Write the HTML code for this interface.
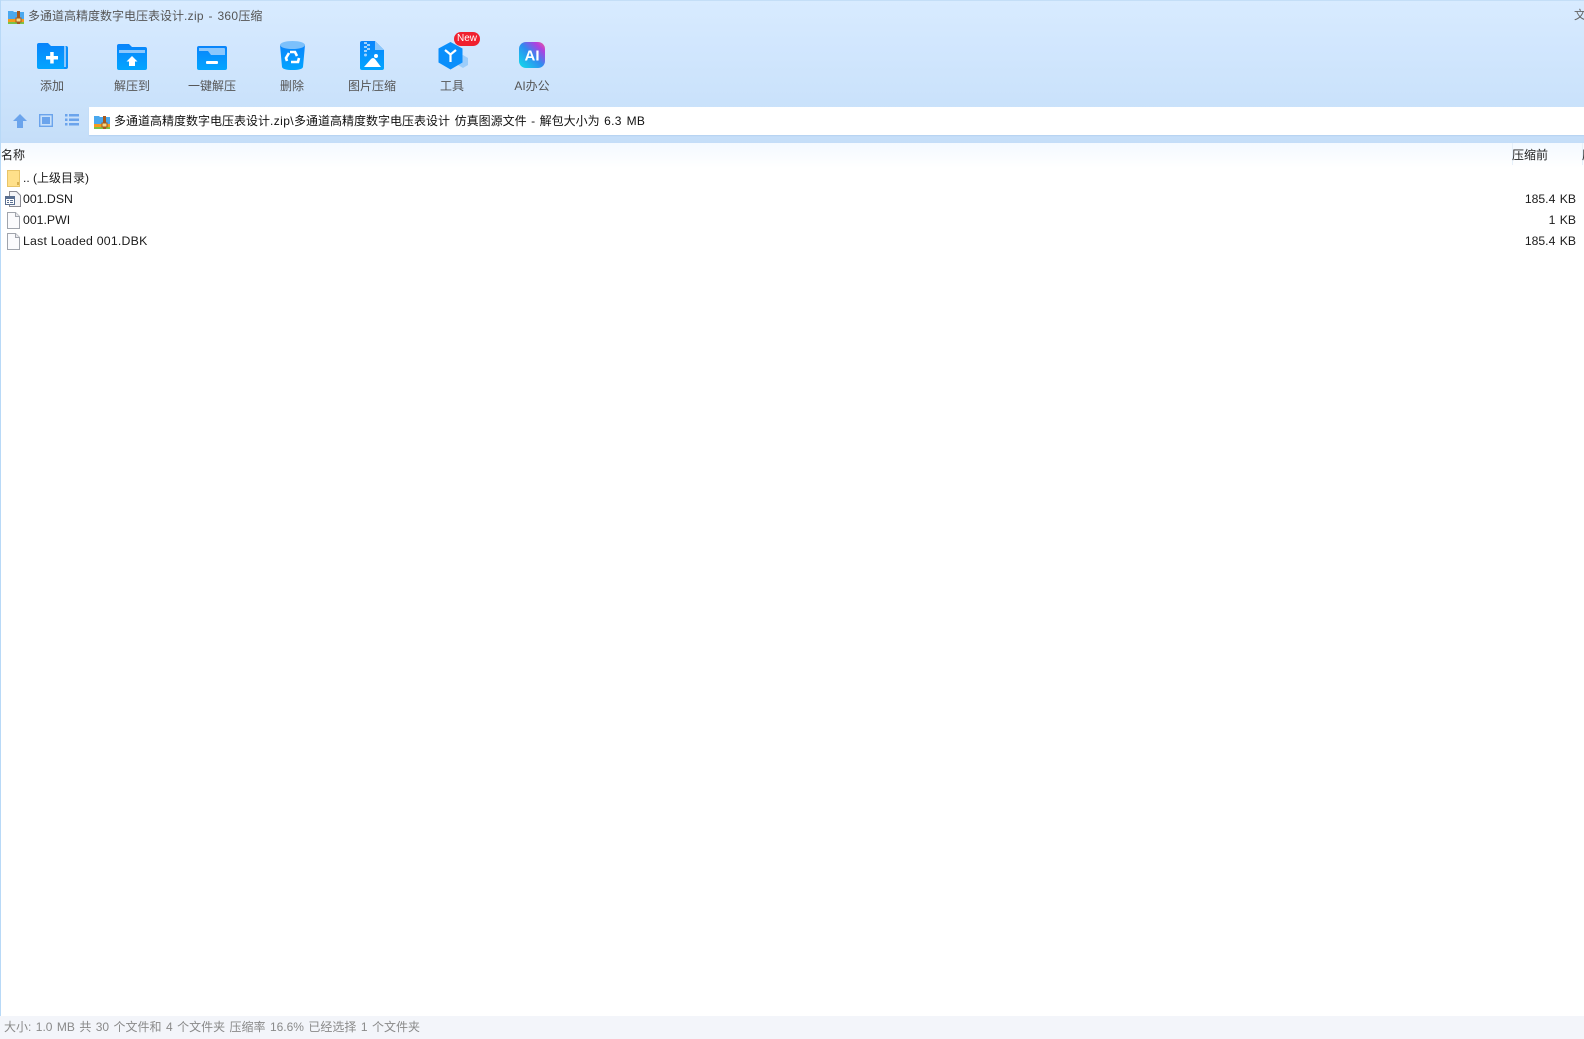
<!DOCTYPE html>
<html lang="zh"><head><meta charset="utf-8"><title>360压缩</title>
<style>
html,body{margin:0;padding:0;width:1584px;height:1039px;overflow:hidden;background:#fff}
body{position:relative;font-family:"Liberation Sans","Noto Sans CJK SC",sans-serif;font-size:12px;color:#222}
.a{position:absolute;white-space:nowrap;line-height:16px}
svg{position:absolute;overflow:visible}
.lbl{width:80px;text-align:center;top:78px;color:#555}
.row{left:23px;color:#1a1a1a;font-size:12.3px}
.sz{right:8px;color:#1a1a1a;font-size:12.2px;word-spacing:1px}
</style></head><body>
<div class="a" style="left:0;top:0;width:1584px;height:143px;background:linear-gradient(#d8ebff 0,#d2e7fe 40px,#c6dff9 135px,#c4ddf8 143px);border-top:1px solid #c4def7;box-sizing:border-box"></div>
<div class="a" style="left:0;top:143px;width:1584px;height:25px;background:linear-gradient(#f3f9ff,#fff)"></div>
<div class="a" style="left:0;top:0;width:1px;height:1016px;background:#b8d9f7"></div>

<svg style="left:8px;top:10px" width="16" height="14" viewBox="0 0 16 14"><path d="M0 1h5l1 1h10v9H0z" fill="#4aa8ee"/><rect y="9" width="16" height="3" fill="#f59a1c"/><rect y="12" width="16" height="2" fill="#7cc246"/><rect x="9" y="1" width="3" height="13" fill="#a5591d"/><rect x="8" y="8" width="5" height="4" fill="#f5d98a" stroke="#a5591d"/></svg>
<div class="a" style="left:28px;top:8px;color:#555;word-spacing:1px"><span>多通道高精度数字电压表设计</span><span style="letter-spacing:.3px">.zip - 360</span>压缩</div>
<div class="a" style="left:1574px;top:7px;color:#666">文</div>

<!-- add -->
<svg style="left:37px;top:43px" width="32" height="27" viewBox="0 0 32 27"><defs><linearGradient id="g" x1="0" y1="0" x2="0" y2="1"><stop offset="0" stop-color="#0a84fb"/><stop offset="1" stop-color="#02a5ff"/></linearGradient></defs><path d="M26 3h3q2 0 2 2v19q0 2-2 2h-3z" fill="#0a8ffb"/><path d="M27 3h1q1 0 1 1v20h-2z" fill="#8cc7fc"/><path d="M0 2q0-2 2-2h9l3 3h13v23H2q-2 0-2-2z" fill="url(#g)"/><rect x="9" y="13" width="12" height="3.500" fill="#fff"/><rect x="13.200" y="9" width="3.500" height="11.500" fill="#fff"/></svg>
<!-- extract -->
<svg style="left:117px;top:44px" width="30" height="26" viewBox="0 0 30 26"><path d="M0 2q0-2 2-2h10l3 3h13q2 0 2 2v19q0 2-2 2H2q-2 0-2-2z" fill="url(#g)"/><rect x="2" y="6" width="26" height="3" fill="#8cc7fc"/><path d="M15 12l5.500 5.500H18v4.500h-6v-4.500H9.500z" fill="#fff"/></svg>
<!-- one-click -->
<svg style="left:197px;top:46px" width="30" height="24" viewBox="0 0 30 24"><path d="M0 2q0-2 2-2h26q2 0 2 2v20q0 2-2 2H2q-2 0-2-2z" fill="url(#g)"/><path d="M2 2h25a1 1 0 0 1 1 1v6H14l-3-4H2z" fill="#8cc7fc"/><rect x="9" y="15" width="12" height="3" rx="1" fill="#fff"/></svg>
<!-- trash -->
<svg style="left:280px;top:41px" width="25" height="29" viewBox="0 0 25 29"><path d="M0 4l2 22q1 3 10.500 3T23 26l2-22z" fill="url(#g)"/><ellipse cx="12.500" cy="4" rx="12.500" ry="4" fill="#7cc0fb"/><g fill="none" stroke="#fff" stroke-width="2.600"><path d="M7 20l-1-3 3-5"/><path d="M10 11h5l2 4"/><path d="M19 17l-1 4h-7"/></g></svg>
<!-- image -->
<svg style="left:360px;top:41px" width="24" height="29" viewBox="0 0 24 29"><path d="M2 0h13l9 9v18q0 2-2 2H2q-2 0-2-2V2q0-2 2-2z" fill="url(#g)"/><path d="M15 0l9 9h-9z" fill="#8cc7fc"/><g fill="#9fd2fd"><rect x="4" y="1" width="3" height="2"/><rect x="7" y="3" width="3" height="2"/><rect x="4" y="5" width="3" height="2"/><rect x="7" y="7" width="3" height="2"/><rect x="4" y="9" width="3" height="2"/><circle cx="5.500" cy="14" r="1.500"/></g><circle cx="16" cy="15" r="2" fill="#fff"/><path d="M4 26l7-8q2-2 4 0l6 8z" fill="#fff"/></svg>
<!-- tools -->
<svg style="left:438px;top:41px" width="32" height="30" viewBox="0 0 32 30"><path d="M20 17l5-3 5 3v7l-5 3-5-3z" fill="#9ccdfa"/><path d="M12.500 1l12 6.500v14l-12 7-12-7v-14z" fill="#0a8ffb"/><path d="M7 9l5.500 4.500L18 9M12.500 13.500V21" fill="none" stroke="#fff" stroke-width="2.200"/></svg>
<div class="a" style="left:454px;top:32px;width:26px;height:14px;border-radius:7px;background:#f0202f;color:#fff;font-size:10px;line-height:14px;text-align:center">New</div>
<!-- AI -->
<svg style="left:519px;top:42px" width="26" height="26" viewBox="0 0 26 26"><defs><linearGradient id="ai" x1="0" y1="1" x2="1" y2="0"><stop offset="0" stop-color="#0fe0ea"/><stop offset=".5" stop-color="#2f8cf0"/><stop offset=".8" stop-color="#b040e0"/><stop offset="1" stop-color="#f06090"/></linearGradient></defs><rect width="26" height="26" rx="7" fill="url(#ai)"/><text x="13" y="18.500" text-anchor="middle" font-family="Liberation Sans" font-weight="bold" font-size="15" fill="#fff">AI</text></svg>

<div class="a lbl" style="left:12px">添加</div>
<div class="a lbl" style="left:92px">解压到</div>
<div class="a lbl" style="left:172px">一键解压</div>
<div class="a lbl" style="left:252px">删除</div>
<div class="a lbl" style="left:332px">图片压缩</div>
<div class="a lbl" style="left:412px">工具</div>
<div class="a lbl" style="left:492px">AI办公</div>

<svg style="left:13px;top:114px" width="14" height="14" viewBox="0 0 14 14"><path d="M7 0l7 7h-4v7H4V7H0z" fill="#6ba4ec"/></svg>
<svg style="left:39px;top:114px" width="14" height="13" viewBox="0 0 14 13"><rect x=".7" y=".7" width="12.600" height="11.600" fill="none" stroke="#6ba4ec" stroke-width="1.400"/><rect x="3" y="3" width="8" height="7" fill="#6ba4ec"/></svg>
<svg style="left:65px;top:114px" width="14" height="12" viewBox="0 0 14 12"><g fill="#6ba4ec"><rect width="2.500" height="2.500"/><rect y="4.500" width="2.500" height="2.500"/><rect y="9" width="2.500" height="2.500"/><rect x="4" width="10" height="2.500"/><rect x="4" y="4.500" width="10" height="2.500"/><rect x="4" y="9" width="10" height="2.500"/></g></svg>

<div class="a" style="left:89px;top:107px;width:1495px;height:28px;background:#fff;box-shadow:0 1px 1px #b6d2f0"></div>
<svg style="left:94px;top:115px" width="16" height="14" viewBox="0 0 16 14"><path d="M0 1h5l1 1h10v9H0z" fill="#4aa8ee"/><rect y="9" width="16" height="3" fill="#f59a1c"/><rect y="12" width="16" height="2" fill="#7cc246"/><rect x="9" y="1" width="3" height="13" fill="#a5591d"/><rect x="8" y="8" width="5" height="4" fill="#f5d98a" stroke="#a5591d"/></svg>
<div class="a" style="left:114px;top:113px;color:#111;word-spacing:1.2px">多通道高精度数字电压表设计<span style="letter-spacing:.4px">.zip\</span>多通道高精度数字电压表设计 仿真图源文件 - 解包大小为 <span style="letter-spacing:.3px">6.3 MB</span></div>

<div class="a" style="left:1px;top:147px;color:#222">名称</div>
<div class="a" style="left:1512px;top:143px;width:1px;height:22px;background:#e6f0fa"></div>
<div class="a" style="left:1582px;top:143px;width:1px;height:22px;background:#e6f0fa"></div>
<div class="a" style="left:1512px;top:147px;color:#222">压缩前</div>
<div class="a" style="left:1582px;top:147px;color:#222;width:2px;overflow:hidden">压</div>

<svg style="left:7px;top:170px" width="13" height="17" viewBox="0 0 13 17"><path d="M.5.500h12v16H.5z" fill="#ffe08a" stroke="#e8c468"/><rect x="10" y="12" width="2" height="3" fill="#d8b050"/></svg>
<div class="a row" style="top:170px;font-size:12px">.. (上级目录)</div>
<svg style="left:5px;top:191px" width="16" height="16" viewBox="0 0 16 16"><path d="M4.500.500h7l4 4v11h-11z" fill="#f4f4f6" stroke="#8a8a92"/><rect x="0" y="5" width="10" height="9" fill="#5a6f90"/><rect x="1" y="8" width="8" height="5" fill="#fff"/><g fill="#5a6f90"><rect x="2" y="9" width="2" height="1"/><rect x="5" y="9" width="3" height="1"/><rect x="2" y="11" width="2" height="1"/><rect x="5" y="11" width="3" height="1"/></g></svg>
<div class="a row" style="top:191px">001.DSN</div>
<svg style="left:7px;top:212px" width="13" height="17" viewBox="0 0 13 17"><path d="M.5.500h8l4 4v12H.5z" fill="#fbfbfd" stroke="#a0a4ac"/><path d="M8.500.500v4h4" fill="#e8e8ec" stroke="#a0a4ac"/></svg>
<div class="a row" style="top:212px">001.PWI</div>
<svg style="left:7px;top:233px" width="13" height="17" viewBox="0 0 13 17"><path d="M.5.500h8l4 4v12H.5z" fill="#fbfbfd" stroke="#a0a4ac"/><path d="M8.500.500v4h4" fill="#e8e8ec" stroke="#a0a4ac"/></svg>
<div class="a row" style="top:233px;letter-spacing:.22px">Last Loaded 001.DBK</div>
<div class="a sz" style="top:191px">185.4 KB</div>
<div class="a sz" style="top:212px">1 KB</div>
<div class="a sz" style="top:233px">185.4 KB</div>

<div class="a" style="left:0;top:1016px;width:1584px;height:23px;background:#f3f5fa"></div>
<div class="a" style="left:4px;top:1019px;color:#8a8a8a;font-size:12px;word-spacing:1.1px">大小: 1.0 MB 共 30 个文件和 4 个文件夹 压缩率 16.6% 已经选择 1 个文件夹</div>
</body></html>
